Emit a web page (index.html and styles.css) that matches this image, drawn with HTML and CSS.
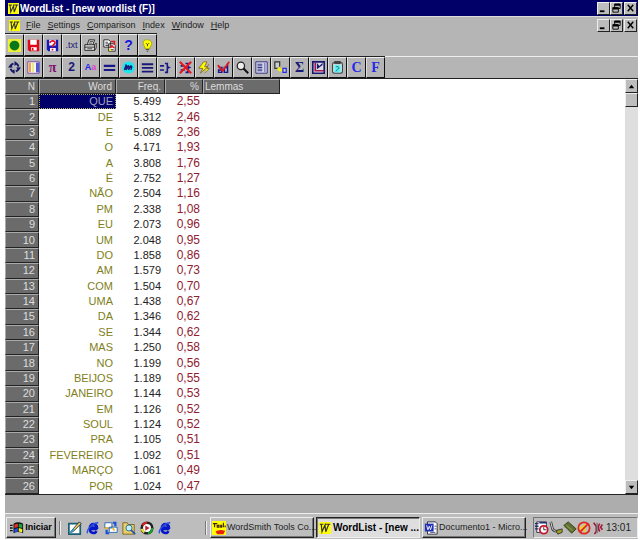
FILE: index.html
```html
<!DOCTYPE html>
<html lang="pt">
<head>
<meta charset="utf-8">
<title>WordList - [new wordlist (F)]</title>
<link rel="stylesheet" href="styles.css">
</head>
<body>
<svg class="defs" aria-hidden="true">
  <symbol id="w" viewBox="0 0 16 16"><path fill="#ff0" d="M0 0h16v16H0z"/><path d="M1 3h5M8 3h7M3 3l1 10 4-9 1 9 4-10" fill="none" stroke="#333" stroke-width="1.600"/></symbol>
  <symbol id="min" viewBox="0 0 12 12"><path d="M2 9h5" stroke="#000" stroke-width="2"/></symbol>
  <symbol id="restore" viewBox="0 0 12 12"><path d="M4 5V1h6v5H8M2 5h6v5H2z" fill="none" stroke="#000"/><path d="M4 2h6M2 6h6" stroke="#000" stroke-width="2"/></symbol>
  <symbol id="close" viewBox="0 0 12 12"><path d="M3 2l6 7M9 2L3 9" stroke="#000" stroke-width="1.6"/></symbol>
  <symbol id="ie" viewBox="0 0 16 16"><path d="M13 9H4.500a4 4 0 0 0 7.500 2.500M4.500 7.500a4 4 0 0 1 8 0z" fill="none" stroke="#0818c8" stroke-width="3"/><path d="M2 14C-1 11 8 2 14 2" fill="none" stroke="#2a50e0" stroke-width="1.500"/></symbol>
</svg>
<div class="window">
  <header class="titlebar">
    <svg class="logo"><use href="#w"/></svg>
    <h1>WordList - [new wordlist (F)]</h1>
    <div class="controls">
      <button aria-label="Minimize"><svg><use href="#min"/></svg></button>
      <button aria-label="Restore"><svg><use href="#restore"/></svg></button>
      <button aria-label="Close" class="last"><svg><use href="#close"/></svg></button>
    </div>
  </header>
  <nav class="menubar">
    <svg class="logo"><use href="#w"/></svg>
    <div class="menus"><button><u>F</u>ile</button><button><u>S</u>ettings</button><button><u>C</u>omparison</button><button><u>I</u>ndex</button><button><u>W</u>indow</button><button><u>H</u>elp</button></div>
    <div class="controls">
      <button aria-label="Minimize document"><svg><use href="#min"/></svg></button>
      <button aria-label="Restore document"><svg><use href="#restore"/></svg></button>
      <button aria-label="Close document" class="last"><svg><use href="#close"/></svg></button>
    </div>
  </nav>
  <div class="toolbar">
    <button aria-label="Start"><svg viewBox="0 0 16 16"><path fill="#ee3" d="M0 0h16v16H0z"/><circle cx="8" cy="8" r="6" fill="#087818"/></svg></button>
    <button aria-label="Save"><svg viewBox="0 0 16 16"><path fill="#e00818" d="M1 1h14v14H3l-2-2z"/><path fill="#fff" d="M4 1h8v6H4zM5 10h7v4H5z"/><path fill="#e00818" d="M6 11h2v3H6z"/></svg></button>
    <button aria-label="Save as"><svg viewBox="0 0 16 16"><path fill="#1818b8" d="M1 1h14v14H3l-2-2z"/><path fill="#fff" d="M4 1h8v7H4zM5 11h7v4H5z"/><path d="M5 5c0-4 7-3 6 0-1 2-3 2-3 4v1M8 12v2" fill="none" stroke="#e01020" stroke-width="2"/></svg></button>
    <button class="txt navy">.txt</button>
    <button aria-label="Print"><svg viewBox="0 0 16 16"><path d="M4 7l2-6h7l-2 6M1 7h12v7H1zM13 7l2-2v6l-2 3M1 10h12" fill="#ddd" stroke="#111"/><path d="M7 3h4M6 5h4M4 12h6" stroke="#333"/></svg></button>
    <button aria-label="Copy"><svg viewBox="0 0 16 16"><path d="M1 1h6l2 2v7H1zM7 6h6l2 2v7H7z" fill="#fff" stroke="#111"/><path d="M3 4h3M3 6h4M3 8h4M9 13h4" stroke="#222"/><path d="M10 3h4v4M10 8l4 3M9 11l3-3" stroke="#e01820" stroke-width="2" fill="none"/><path fill="#ee0" d="M8 12h2v3H8z"/></svg></button>
    <button class="help">?</button>
    <button aria-label="Tip"><svg viewBox="0 0 16 16"><path d="M5 10C-1 3 6 0 8 1c5 0 7 5 3 9v2H5z" fill="#ff0" stroke="#a0a000"/><path d="M8 9V6M6 5l2 2 2-2M6 13h4M7 15h2" stroke="#333" fill="none"/></svg></button>
  </div>
  <div class="toolbar second">
    <button aria-label="Refresh"><svg viewBox="0 0 16 16"><circle cx="8" cy="8" r="5" fill="none" stroke="#181868" stroke-width="2.200" stroke-dasharray="6 1.850"/><path d="M8 0l4 3-4 3zM16 8l-3 4-3-4zM8 16l-4-3 4-3zM0 8l3-4 3 4z" fill="#181868"/></svg></button>
    <button aria-label="Columns"><svg viewBox="0 0 16 16"><path fill="#fff" stroke="#7030a0" d="M1 1h14v14H1z"/><path fill="#f0a050" d="M2 2h3v12H2z"/><path fill="#e8e890" d="M6 2h3v12H6z"/><path fill="#5058d0" d="M11 2h4v12h-4z"/></svg></button>
    <button class="serif purple">π</button>
    <button class="two navy">2</button>
    <button class="txt bold blue">A<span>a</span></button>
    <button aria-label="Equals"><svg viewBox="0 0 16 16"><path d="M1 6h14M1 11h14" stroke="#181888" stroke-width="2.500"/></svg></button>
    <button aria-label="Match"><svg viewBox="0 0 16 16"><circle cx="8" cy="8" r="7.500" fill="#18e8f0"/><path d="M3 11l2-6 1 1-1 5 3-5 1 1-1 4 3-5 1 1-1 4" fill="none" stroke="#181878" stroke-width="1.700"/></svg></button>
    <button aria-label="List"><svg viewBox="0 0 16 16"><path d="M1 4h14M1 8.500h14M1 13h14" stroke="#181878" stroke-width="2.200"/></svg></button>
    <button aria-label="Join"><svg viewBox="0 0 16 16"><path d="M0 6h5M0 11h5M6 3h3v4l2 1-2 1v5H6" fill="none" stroke="#181888" stroke-width="2"/></svg></button>
    <button aria-label="Unjoin"><svg viewBox="0 0 16 16"><path d="M2 6h5M2 11h5M8 3h3v4l2 1-2 1v5H8" fill="none" stroke="#181888" stroke-width="2"/><path d="M1 1l14 14M15 1L1 15" stroke="#e81820" stroke-width="2.500"/></svg></button>
    <button aria-label="Zap"><svg viewBox="0 0 16 16"><path d="M7 1L1 9h5l-3 6 9-8H8l3-6zM13 4l-2 5h3l-6 6" fill="#ff0" stroke="#806020"/></svg></button>
    <button aria-label="Edit entry"><svg viewBox="0 0 16 16"><path d="M2 8h4v6H2v-3h4M13 3v11H9V8h4" fill="none" stroke="#181888" stroke-width="1.800"/><path d="M1 5l6 7L15 1" fill="none" stroke="#e01820" stroke-width="2.200"/></svg></button>
    <button aria-label="Search"><svg viewBox="0 0 16 16"><circle cx="6" cy="6" r="4.500" fill="#eee" stroke="#222" stroke-width="1.500"/><path d="M9 9l6 6" stroke="#111" stroke-width="2.500"/></svg></button>
    <button aria-label="Layout"><svg viewBox="0 0 16 16"><path fill="#d8d8e8" stroke="#181878" d="M1 1h14v14H1z"/><path d="M3 4h6M3 6h6M3 8h6M3 10h6M3 12h6" stroke="#181878"/><path d="M12 2v12" stroke="#8888c8" stroke-width="2"/></svg></button>
    <button aria-label="Link"><svg viewBox="0 0 16 16"><path d="M1 1h6v8H1z" fill="#ccc" stroke="#333" stroke-width="1.500"/><path d="M3 10l5-4v3h2v4H7z" fill="#ee2"/><path d="M11 9h4v5h-4z" fill="#ccc" stroke="#2828e8" stroke-width="1.500"/></svg></button>
    <button class="serif navy">Σ</button>
    <button aria-label="Plot"><svg viewBox="0 0 16 16"><path fill="#ddd" stroke="#181870" stroke-width="2" d="M1 1h14v14H1z"/><path d="M4 2v10h11" stroke="#a01858" fill="none" stroke-width="2"/><path d="M6 10V2l3 4 4-4v3l-4 3z" fill="#181870"/></svg></button>
    <button aria-label="Clipboard"><svg viewBox="0 0 16 16"><rect x="2" y="2" width="12" height="13" rx="2" fill="#e8ffff" stroke="#444" stroke-width="1.500"/><path d="M4 0h8v4H4z" fill="#444"/><path fill="#60f0f0" d="M4 5h8v9H4z"/><path d="M6 7h3l1 2-2 1-2 3" fill="none" stroke="#157080"/></svg></button>
    <button class="serif blue">C</button>
    <button class="serif blue">F</button>
  </div>
  <main class="content">
    <table>
      <colgroup><col class="c-n"><col class="c-word"><col class="c-freq"><col class="c-pct"><col class="c-lem"><col></colgroup>
      <thead><tr><th>N</th><th>Word</th><th>Freq.</th><th>%</th><th class="lemmas">Lemmas</th><td></td></tr></thead>
      <tbody>
      <tr><th>1</th><td class="selected">QUE</td><td>5.499</td><td>2,55</td></tr>
      <tr><th>2</th><td>DE</td><td>5.312</td><td>2,46</td></tr>
      <tr><th>3</th><td>E</td><td>5.089</td><td>2,36</td></tr>
      <tr><th>4</th><td>O</td><td>4.171</td><td>1,93</td></tr>
      <tr><th>5</th><td>A</td><td>3.808</td><td>1,76</td></tr>
      <tr><th>6</th><td>É</td><td>2.752</td><td>1,27</td></tr>
      <tr><th>7</th><td>NÃO</td><td>2.504</td><td>1,16</td></tr>
      <tr><th>8</th><td>PM</td><td>2.338</td><td>1,08</td></tr>
      <tr><th>9</th><td>EU</td><td>2.073</td><td>0,96</td></tr>
      <tr><th>10</th><td>UM</td><td>2.048</td><td>0,95</td></tr>
      <tr><th>11</th><td>DO</td><td>1.858</td><td>0,86</td></tr>
      <tr><th>12</th><td>AM</td><td>1.579</td><td>0,73</td></tr>
      <tr><th>13</th><td>COM</td><td>1.504</td><td>0,70</td></tr>
      <tr><th>14</th><td>UMA</td><td>1.438</td><td>0,67</td></tr>
      <tr><th>15</th><td>DA</td><td>1.346</td><td>0,62</td></tr>
      <tr><th>16</th><td>SE</td><td>1.344</td><td>0,62</td></tr>
      <tr><th>17</th><td>MAS</td><td>1.250</td><td>0,58</td></tr>
      <tr><th>18</th><td>NO</td><td>1.199</td><td>0,56</td></tr>
      <tr><th>19</th><td>BEIJOS</td><td>1.189</td><td>0,55</td></tr>
      <tr><th>20</th><td>JANEIRO</td><td>1.144</td><td>0,53</td></tr>
      <tr><th>21</th><td>EM</td><td>1.126</td><td>0,52</td></tr>
      <tr><th>22</th><td>SOUL</td><td>1.124</td><td>0,52</td></tr>
      <tr><th>23</th><td>PRA</td><td>1.105</td><td>0,51</td></tr>
      <tr><th>24</th><td>FEVEREIRO</td><td>1.092</td><td>0,51</td></tr>
      <tr><th>25</th><td>MARÇO</td><td>1.061</td><td>0,49</td></tr>
      <tr><th>26</th><td>POR</td><td>1.024</td><td>0,47</td></tr>
      </tbody>
    </table>
    <div class="scrollbar">
      <button aria-label="Scroll up"><svg viewBox="0 0 12 12"><path d="M6 4l3 4H3z"/></svg></button>
      <div class="thumb"></div>
      <button class="down" aria-label="Scroll down"><svg viewBox="0 0 12 12"><path d="M6 8L3 4h6z"/></svg></button>
    </div>
  </main>
  <div class="status"></div>
  <footer class="taskbar">
    <button class="start"><svg viewBox="0 0 16 16"><path d="M0 5h3M0 8h3M0 11h3" stroke="#111" stroke-width="1.500"/><path d="M4 3q5-3 11 0v11q-6-3-11 0z" fill="#111"/><path fill="#e83020" d="M5 4q2-1 4-1v4q-2 0-4 1z"/><path fill="#20a040" d="M10 3q2 0 4 1v4l-4-1z"/><path fill="#2050e0" d="M5 9l4-1v4l-4 1z"/><path fill="#ee2" d="M10 8l4 1v4l-4-1z"/></svg>Iniciar</button>
    <div class="quick">
      <button aria-label="Desktop"><svg viewBox="0 0 16 16"><path d="M1 3h13v12H1z" fill="#fff" stroke="#186078" stroke-width="2"/><path d="M4 11l9-10 2 2-9 9-3 1z" fill="#f0d060" stroke="#223"/><path d="M3 13l4-4" stroke="#28a0d0" stroke-width="2"/></svg></button>
      <button aria-label="Internet Explorer"><svg><use href="#ie"/></svg></button>
      <button aria-label="Mail"><svg viewBox="0 0 16 16"><path d="M1 2h8v6H1zM6 7h9v6H6z" fill="#fff" stroke="#2060b0"/><path d="M10 2h3v4M6 14H3v-4" fill="none" stroke="#1850d8" stroke-width="2.500"/><path d="M1 8h4M10 8l2 3" stroke="#f0b020" stroke-width="2"/></svg></button>
      <button aria-label="Find"><svg viewBox="0 0 16 16"><path d="M1 2h5l1 2h7v11H1z" fill="#e8cf68" stroke="#766020"/><circle cx="8" cy="8" r="3.500" fill="#c0f0ff" stroke="#206888"/><path d="M10 10l5 5" stroke="#2050b0" stroke-width="2"/></svg></button>
      <button aria-label="Channels"><svg viewBox="0 0 16 16"><circle cx="8" cy="8" r="6" fill="#fff" stroke="#222" stroke-width="3"/><path d="M3 5a6 6 0 0 1 5-3" fill="none" stroke="#e02020" stroke-width="2.500"/><path d="M14 8a6 6 0 0 1-5 6" fill="none" stroke="#18a030" stroke-width="2.500"/><path d="M2 9a6 6 0 0 0 3 4" fill="none" stroke="#ee2" stroke-width="2.500"/><path d="M6 5l5 3-5 3z" fill="#c02030"/></svg></button>
      <button aria-label="Browser"><svg><use href="#ie"/></svg></button>
    </div>
    <div class="tasks">
      <button><svg viewBox="0 0 16 16"><path fill="#ff0" d="M0 0h16v16H0z"/><path d="M1 3h5M3 3v4M6 5h2v2H6zM10 5h1v2h-1zM13 2v5M15 5v2" fill="none" stroke="#402000" stroke-width="1.300"/><path d="M4 12q4-3 11-1l-2 4H6z" fill="#e82010"/></svg><span>WordSmith Tools Co...</span></button>
      <button class="active"><svg><use href="#w"/></svg><span>WordList - [new ...</span></button>
      <button><svg viewBox="0 0 16 16"><path d="M4 1h9l2 2v12H4z" fill="#fff" stroke="#223"/><path d="M1 3h10v9H1z" fill="#2030b0"/><path d="M3 5l1.500 5L6 6l1.500 4L9 5" fill="none" stroke="#fff"/><path d="M12 6h2M12 9h2M7 13h6" stroke="#446"/></svg><span>Documento1 - Micro...</span></button>
    </div>
    <div class="tray">
      <svg viewBox="0 0 16 16"><path d="M2 1h11v12H2z" fill="#fff" stroke="#224"/><path d="M0 3h4M0 6h4M0 9h4M5 2h8" stroke="#223070" stroke-width="1.500"/><circle cx="10" cy="10" r="4.500" fill="#fff" stroke="#c01830" stroke-width="2"/><path d="M10 7v3h3" fill="none" stroke="#222"/></svg>
      <svg viewBox="0 0 16 16"><path d="M2 1l2 8q2 4 9 2" fill="none" stroke="#333" stroke-width="3"/><path d="M2 1l2 8q2 4 9 2" fill="none" stroke="#eee"/><path d="M8 11l7-2v4l-5 2z" fill="#a0a020" stroke="#333"/></svg>
      <svg viewBox="0 0 16 16"><path d="M1 5l5-4 9 8-5 5z" fill="#607030" stroke="#303818"/><path d="M4 5l7 6M1 8l1-1M4 11l1-1M7 14l1-1" stroke="#a0b060"/></svg>
      <svg viewBox="0 0 16 16"><path d="M3 6h3l4-4v12L6 10H3z" fill="#f0d030"/><circle cx="8" cy="8" r="6.500" fill="none" stroke="#e02820" stroke-width="2"/><path d="M3 13L13 3" stroke="#e02820" stroke-width="2"/></svg>
      <svg viewBox="0 0 16 16"><path d="M3 2l3 4v6l-2 3M10 3q-3 4 0 9M13 4l-2 3 2 3" fill="none" stroke="#a01838" stroke-width="1.800"/><path d="M7 2v12" stroke="#777" stroke-width="1.500"/></svg>
      <time>13:01</time>
    </div>
  </footer>
</div>
</body>
</html>
```
FILE: styles.css
```css
* { box-sizing: border-box; }
body { margin: 0; background: #fff; color: #222; font: 9px/15px "Liberation Sans", Arial, sans-serif; }
button { margin: 0; padding: 0; border: 0; background: none; color: inherit; font: inherit; display: flex; align-items: center; justify-content: center; }
svg { display: block; flex: none; }
.defs { position: absolute; width: 0; height: 0; }
.window { display: flex; flex-direction: column; height: 100vh; padding: 0 2px 1px 5px; }

.titlebar, .menubar { display: flex; align-items: center; background: #b5b5b5; }
.titlebar { height: 16px; padding-left: 3px; background: #000068; color: #fff; }
.titlebar h1 { margin: 0 0 0 1px; font-size: 10px; line-height: 15px; font-weight: bold; white-space: nowrap; }
.logo { width: 11px; height: 11px; }
.menubar { height: 18px; padding-left: 4px; border-top: 1px solid #ddd; }
.menus { display: flex; gap: 7px; margin-left: 6px; }
.menus u { text-underline-offset: 1px; }
.controls { display: flex; margin-left: auto; padding-right: 1px; }
.controls button { width: 13px; height: 13px; background: #bdbdbd; border: 1px solid; border-color: #eee #222 #222 #eee; }
.controls .last { margin-left: 1px; }
.controls svg { width: 11px; height: 11px; }

.toolbar { display: flex; height: 22px; background: #b5b5b5; }
.toolbar.second { height: 23px; border-top: 1px solid #eee; border-bottom: 1px solid #222; }
.toolbar button { width: 19px; border: 1px solid; border-color: #eee #111 #111 #ddd; box-shadow: 0 -1px #222; }
.toolbar svg { width: 13px; height: 13px; }
.toolbar .txt { font-size: 9px; }
.toolbar .bold { font-weight: bold; }
.toolbar .txt span { color: #e040d0; }
.toolbar .help { color: #1818e0; font-size: 14px; font-weight: bold; }
.toolbar .serif { font: bold 14px/15px "Liberation Serif", serif; }
.toolbar .two { font-size: 12px; font-weight: bold; }
.toolbar .navy { color: #181878; }
.toolbar .purple { color: #801070; }
.toolbar .blue { color: #2828e8; }

.content { flex: 1; min-height: 0; display: flex; border-bottom: 1px solid #222; }
table { flex: 1; width: 100%; height: 100%; table-layout: fixed; border-collapse: separate; border-spacing: 0; font-size: 11px; }
thead { font-size: 10px; }
.c-n { width: 34px; }
.c-word { width: 77px; }
.c-freq { width: 49px; }
.c-pct { width: 38px; }
.c-lem { width: 77px; }
th, td { padding: 0 3px 0 0; line-height: 13px; text-align: right; font-weight: normal; white-space: nowrap; }
th { background: #6b6b6b; color: #ddd; border: 1px solid; border-color: #aaa #222 #222 #aaa; }
.lemmas { text-align: left; padding-left: 1px; }
tbody td:nth-child(2) { color: #808020; }
tbody td:nth-child(3) { padding-right: 4px; }
tbody td:nth-child(4) { color: #902030; font-size: 12px; }
tbody td.selected { background: #000068; color: #a0a0c0; outline: 1px dotted #aaa860; outline-offset: -1px; }
.scrollbar { width: 13px; display: flex; flex-direction: column; background: #dedede; }
.scrollbar button, .thumb { height: 14px; background: #bdbdbd; border: 1px solid; border-color: #eee #222 #222 #eee; }
.scrollbar .down { margin-top: auto; }
.scrollbar svg { width: 11px; height: 11px; }
.status { height: 18px; background: #adadad; }

.taskbar { display: flex; align-items: center; height: 26px; padding: 2px 0 0 1px; background: #bdbdbd; border-top: 1px solid #eee; }
.taskbar svg { width: 14px; height: 14px; }
.start, .tasks button { height: 21px; border: 1px solid; border-color: #eee #222 #222 #eee; box-shadow: inset -1px -1px #777; }
.start { flex: none; gap: 1px; width: 50px; font-weight: bold; color: #000; }
.quick { flex: none; display: flex; gap: 4px; width: 146px; margin-left: 4px; padding-left: 7px; border: solid; border-width: 0 1px; border-color: #eee #777 #eee #eee; box-shadow: -1px 0 #777, 1px 0 #eee; }
.tasks { flex: 1; min-width: 0; display: flex; gap: 2px; margin: 0 7px 0 4px; }
.tasks button { flex: 1 1 0; min-width: 0; gap: 1px; padding-left: 1px; justify-content: flex-start; white-space: nowrap; }
.tasks .active { background: #dedede; border-color: #222 #eee #eee #222; box-shadow: inset 1px 1px #777; font-size: 10px; font-weight: bold; color: #000; }
.tasks .active svg { width: 12px; height: 12px; margin: 0 1px; }
.tray { flex: none; display: flex; align-items: center; width: 105px; height: 21px; padding: 0 6px 0 1px; border: 1px solid; border-color: #777 #eee #eee #777; }
.tray time { margin-left: auto; font-size: 10px; }
```
